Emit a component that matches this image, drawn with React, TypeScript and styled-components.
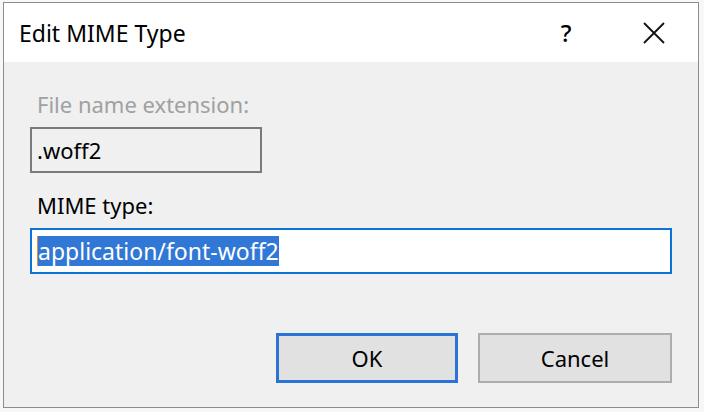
import React from "react";
import styled, { createGlobalStyle } from "styled-components";

const GlobalStyle = createGlobalStyle`
  html, body {
    margin: 0;
    padding: 0;
    background: #ffffff;
  }
  body {
    font-family: "Segoe UI", "Noto Sans", "Liberation Sans", sans-serif;
    width: 704px;
    height: 412px;
    overflow: hidden;
  }
`;

const Page = styled.div`
  width: 704px;
  height: 412px;
  padding: 2px 5px 4px 3px;
  box-sizing: border-box;
  background: #f7f7f7;
`;

const Dialog = styled.div`
  width: 696px;
  height: 406px;
  box-sizing: border-box;
  border: 1px solid #8c8c8c;
  background: #f0f0f0;
  display: flex;
  flex-direction: column;
`;

const TitleBar = styled.div`
  height: 59px;
  background: #ffffff;
  display: flex;
  align-items: center;
`;

const Title = styled.div`
  flex: 1;
  padding-left: 15px;
  font-size: 23px;
  color: #000;
`;

const TitleButton = styled.div`
  width: 88px;
  height: 59px;
  display: flex;
  align-items: center;
  justify-content: center;
  font-size: 24px;
  font-weight: 500;
  color: #000;
`;

const Body = styled.div`
  flex: 1;
  display: flex;
  flex-direction: column;
  padding: 27px 26px 0 26px;
`;

const Label = styled.div<{ $disabled?: boolean }>`
  height: 30px;
  line-height: 30px;
  font-size: 22px;
  padding-left: 7px;
  color: ${({ $disabled }) => ($disabled ? "#a0a0a0" : "#000000")};
`;

const TextBox = styled.div<{ $width: number; $focused?: boolean }>`
  width: ${({ $width }) => $width}px;
  height: 46px;
  box-sizing: border-box;
  border: 2px solid ${({ $focused }) => ($focused ? "#0a74d8" : "#7a7a7a")};
  background: ${({ $focused }) => ($focused ? "#ffffff" : "#f0f0f0")};
  display: flex;
  align-items: center;
  padding-left: 5px;
  font-size: 22px;
  color: #000;
  margin-top: 8px;
`;

const Selected = styled.span`
  display: inline-block;
  height: 30px;
  line-height: 30px;
  font-size: 23px;
  background: #3178d6;
  color: #ffffff;
  border-left: 1px solid #e8893a;
`;

const Spacer = styled.div`
  height: 17px;
`;

const ButtonRow = styled.div`
  display: flex;
  justify-content: flex-end;
  gap: 20px;
  margin-top: 59px;
`;

const Button = styled.div<{ $width: number; $default?: boolean }>`
  width: ${({ $width }) => $width}px;
  height: 50px;
  box-sizing: border-box;
  border: ${({ $default }) => ($default ? "3px solid #2a74d6" : "2px solid #adadad")};
  background: #e1e1e1;
  display: flex;
  align-items: center;
  justify-content: center;
  font-size: 22px;
  color: #000;
`;

function CloseIcon() {
  return (
    <svg width="22" height="22" viewBox="0 0 22 22">
      <path d="M1 1 L21 21 M21 1 L1 21" stroke="#111" strokeWidth="1.8" fill="none" />
    </svg>
  );
}

export default function App() {
  return (
    <>
      <GlobalStyle />
      <Page>
        <Dialog>
          <TitleBar>
            <Title>Edit MIME Type</Title>
            <TitleButton>?</TitleButton>
            <TitleButton>
              <CloseIcon />
            </TitleButton>
          </TitleBar>
          <Body>
            <Label $disabled>File name extension:</Label>
            <TextBox $width={232}>.woff2</TextBox>
            <Spacer />
            <Label>MIME type:</Label>
            <TextBox $width={642} $focused>
              <Selected>application/font-woff2</Selected>
            </TextBox>
            <ButtonRow>
              <Button $width={182} $default>
                OK
              </Button>
              <Button $width={194}>Cancel</Button>
            </ButtonRow>
          </Body>
        </Dialog>
      </Page>
    </>
  );
}
